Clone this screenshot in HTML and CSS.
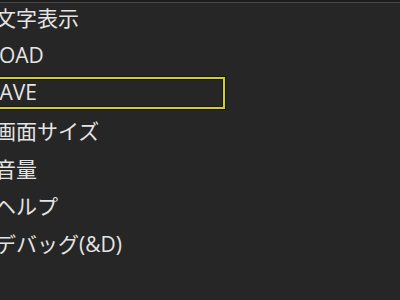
FILE: index.html
```html
<!DOCTYPE html>
<html lang="ja">
<head>
<meta charset="utf-8">
<link rel="stylesheet" href="styles.css">
</head>
<body>
<div class="screen">
  <div class="topbar"></div>
  <ul class="menu">
    <li class="item">文字表示</li>
    <li class="item latin">LOAD</li>
    <li class="item latin selected">SAVE</li>
    <li class="item">画面サイズ</li>
    <li class="item">音量</li>
    <li class="item">ヘルプ</li>
    <li class="item">デバッグ(&amp;D)</li>
  </ul>
</div>
</body>
</html>
```
FILE: styles.css
```css
html, body {
  margin: 0;
  padding: 0;
  background: #262626;
}
.screen {
  width: 400px;
  height: 300px;
  overflow: hidden;
  background: #262626;
}
.topbar {
  height: 2px;
  background: #1c1c1c;
  border-bottom: 1px solid #474747;
}
.menu {
  list-style: none;
  margin: -4.8px 0 0 -30px;
  padding: 0;
  font-family: "Open Sans", "Noto Sans CJK JP", sans-serif;
  font-size: 21px;
  color: #e4e4e4;
}
.item {
  height: 37.66px;
  display: flex;
  align-items: center;
  padding-left: 25px;
  box-sizing: border-box;
  white-space: nowrap;
}
.item.latin {
  padding-left: 18px;
}
.item.selected {
  position: relative;
}
.item.selected::after {
  content: "";
  position: absolute;
  left: 0;
  top: 3px;
  width: 255px;
  height: 32px;
  box-sizing: border-box;
  border: 2px solid #d6d20c;
  box-shadow: 0 0 0 1px #141414, inset 0 0 0 1px #141414;
}
```
